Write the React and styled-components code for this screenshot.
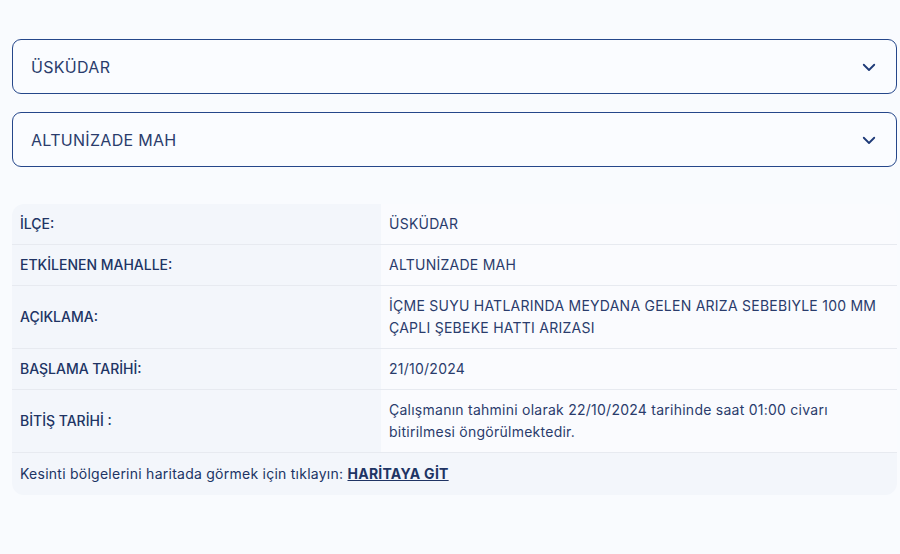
import React from "react";
import styled, { createGlobalStyle } from "styled-components";

const Global = createGlobalStyle`
  html, body { margin: 0; padding: 0; background: #f9fbfe; }
  body { font-family: "Inter", "Noto Sans", sans-serif; color: #1f2f5e; }
  * { box-sizing: border-box; }
`;

const Page = styled.div`
  padding: 39px 3px 0 12px;
  display: flex;
  flex-direction: column;
  gap: 18px;
  width: 900px;
`;

const Select = styled.div`
  height: 55px;
  border: 1px solid #25478a;
  border-radius: 9px;
  background: #fafcff;
  display: flex;
  align-items: center;
  justify-content: space-between;
  padding: 0 18px 0 18px;
  font-size: 16px;
  letter-spacing: 0.3px;
  color: #2a3c6c;
`;

const Chevron = () => (
  <svg width="18" height="18" viewBox="0 0 24 24" fill="none" stroke="#1e3a78" strokeWidth="2.4" strokeLinecap="round" strokeLinejoin="round">
    <path d="M5 9l7 7 7-7" />
  </svg>
);

const Table = styled.div`
  margin-top: 19px;
  border-radius: 12px;
  overflow: hidden;
  background: #fafbfe;
  display: grid;
  grid-template-columns: 369px 1fr;
`;

const Cell = styled.div`
  padding: 9px 8px;
  line-height: 22px;
  font-size: 14px;
  display: flex;
  align-items: center;
  border-bottom: 1px solid #e7eaf0;
`;

const Label = styled(Cell)`
  background: #f3f6fb;
  font-weight: 500;
  color: #203464;
`;

const Value = styled(Cell)`
  background: #fafbfe;
  color: #2a3c6c;
  letter-spacing: 0.25px;
`;

const Footer = styled.div`
  grid-column: 1 / -1;
  background: #f3f6fb;
  padding: 10px 8px 11px;
  line-height: 21px;
  font-size: 14px;
  letter-spacing: 0.25px;
  color: #203464;
`;

const MapLink = styled.a`
  font-weight: 700;
  color: #203464;
  text-decoration: underline;
`;

const rows = [
  ["İLÇE:", "ÜSKÜDAR"],
  ["ETKİLENEN MAHALLE:", "ALTUNİZADE MAH"],
  ["AÇIKLAMA:", "İÇME SUYU HATLARINDA MEYDANA GELEN ARIZA SEBEBIYLE 100 MM ÇAPLI ŞEBEKE HATTI ARIZASI"],
  ["BAŞLAMA TARİHİ:", "21/10/2024"],
  ["BİTİŞ TARİHİ :", "Çalışmanın tahmini olarak 22/10/2024 tarihinde saat 01:00 civarı bitirilmesi öngörülmektedir."],
];

export default function App() {
  return (
    <>
      <Global />
      <Page>
        <Select>
          <span>ÜSKÜDAR</span>
          <Chevron />
        </Select>
        <Select>
          <span>ALTUNİZADE MAH</span>
          <Chevron />
        </Select>
        <Table>
          {rows.map(([l, v], i) => (
            <React.Fragment key={i}>
              <Label>{l}</Label>
              <Value>{v}</Value>
            </React.Fragment>
          ))}
          <Footer>
            Kesinti bölgelerini haritada görmek için tıklayın: <MapLink href="#">HARİTAYA GİT</MapLink>
          </Footer>
        </Table>
      </Page>
    </>
  );
}
